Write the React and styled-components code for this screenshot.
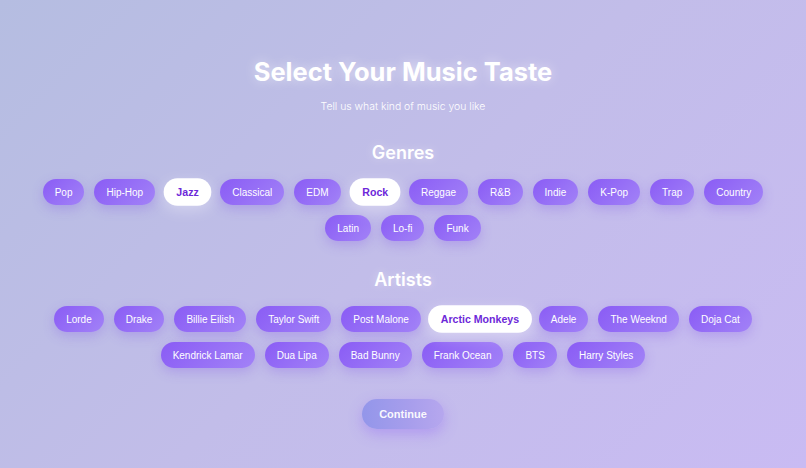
import React, { useState } from "react";
import styled, { createGlobalStyle } from "styled-components";

const GlobalStyle = createGlobalStyle`
  html, body { margin: 0; padding: 0; }
  body {
    font-family: "Liberation Sans", Arial, sans-serif;
    background: linear-gradient(135deg, #b5bde1 0%, #c2bde9 50%, #c9bbf3 100%);
    min-height: 100vh;
  }
  * { box-sizing: border-box; }
`;

const Page = styled.div`
  width: 806px;
  height: 468px;
  display: flex;
  flex-direction: column;
  align-items: center;
  padding-top: 56px;
`;

const Title = styled.h1`
  margin: 0;
  font-family: Inter, "Open Sans", sans-serif;
  font-weight: 700;
  font-size: 25.5px;
  line-height: 32px;
  color: #ffffff;
  text-shadow: 0 0 12px rgba(255, 255, 255, 0.55);
`;

const Subtitle = styled.p`
  margin: 12px 0 0;
  font-family: Inter, "Open Sans", sans-serif;
  font-weight: 300;
  font-size: 10.4px;
  line-height: 14px;
  color: #ffffff;
`;

const Section = styled.section`
  margin-top: ${(p) => p.$top}px;
  display: flex;
  flex-direction: column;
  align-items: center;
  width: 100%;
`;

const SectionTitle = styled.h2`
  margin: 0 0 15px;
  font-family: Inter, "Open Sans", sans-serif;
  font-weight: 600;
  font-size: 18px;
  line-height: 22px;
  color: #ffffff;
  text-shadow: 0 0 10px rgba(255, 255, 255, 0.4);
`;

const ChipList = styled.div`
  display: flex;
  flex-wrap: wrap;
  justify-content: center;
  gap: 10px 10px;
  max-width: 740px;
`;

const Chip = styled.button`
  border: none;
  outline: none;
  cursor: pointer;
  height: 26px;
  padding: 0 12px;
  border-radius: 13px;
  font-family: "Liberation Sans", Arial, sans-serif;
  font-size: 10px;
  font-weight: ${(p) => (p.$selected ? 700 : 400)};
  color: ${(p) => (p.$selected ? "#6d28d9" : "#ffffff")};
  background: ${(p) =>
    p.$selected ? "#ffffff" : "linear-gradient(135deg, #8a5cf5 0%, #a282f7 100%)"};
  box-shadow: ${(p) =>
    p.$selected
      ? "0 4px 14px rgba(255, 255, 255, 0.35)"
      : "0 4px 12px rgba(124, 80, 230, 0.28)"};
  transform: ${(p) => (p.$selected ? "scale(1.06)" : "none")};
`;

const ContinueButton = styled.button`
  margin-top: 31px;
  border: none;
  cursor: pointer;
  width: 82px;
  height: 30px;
  border-radius: 15px;
  font-family: "Liberation Sans", Arial, sans-serif;
  font-weight: 700;
  font-size: 11px;
  color: rgba(255, 255, 255, 0.94);
  background: linear-gradient(90deg, #9396ea 0%, #a89eec 60%, #b6a7ee 100%);
  box-shadow: 0 5px 14px rgba(139, 92, 246, 0.35);
`;

const genres = [
  "Pop", "Hip-Hop", "Jazz", "Classical", "EDM", "Rock", "Reggae", "R&B",
  "Indie", "K-Pop", "Trap", "Country", "Latin", "Lo-fi", "Funk",
];

const artists = [
  "Lorde", "Drake", "Billie Eilish", "Taylor Swift", "Post Malone",
  "Arctic Monkeys", "Adele", "The Weeknd", "Doja Cat", "Kendrick Lamar",
  "Dua Lipa", "Bad Bunny", "Frank Ocean", "BTS", "Harry Styles",
];

export default function App() {
  const [selGenres, setSelGenres] = useState(["Jazz", "Rock"]);
  const [selArtists, setSelArtists] = useState(["Arctic Monkeys"]);

  const toggle = (list, setList, item) =>
    setList(list.includes(item) ? list.filter((x) => x !== item) : [...list, item]);

  return (
    <>
      <GlobalStyle />
      <Page>
        <Title>Select Your Music Taste</Title>
        <Subtitle>Tell us what kind of music you like</Subtitle>

        <Section $top={28}>
          <SectionTitle>Genres</SectionTitle>
          <ChipList>
            {genres.map((g) => (
              <Chip
                key={g}
                $selected={selGenres.includes(g)}
                onClick={() => toggle(selGenres, setSelGenres, g)}
              >
                {g}
              </Chip>
            ))}
          </ChipList>
        </Section>

        <Section $top={28}>
          <SectionTitle>Artists</SectionTitle>
          <ChipList>
            {artists.map((a) => (
              <Chip
                key={a}
                $selected={selArtists.includes(a)}
                onClick={() => toggle(selArtists, setSelArtists, a)}
              >
                {a}
              </Chip>
            ))}
          </ChipList>
        </Section>

        <ContinueButton>Continue</ContinueButton>
      </Page>
    </>
  );
}
